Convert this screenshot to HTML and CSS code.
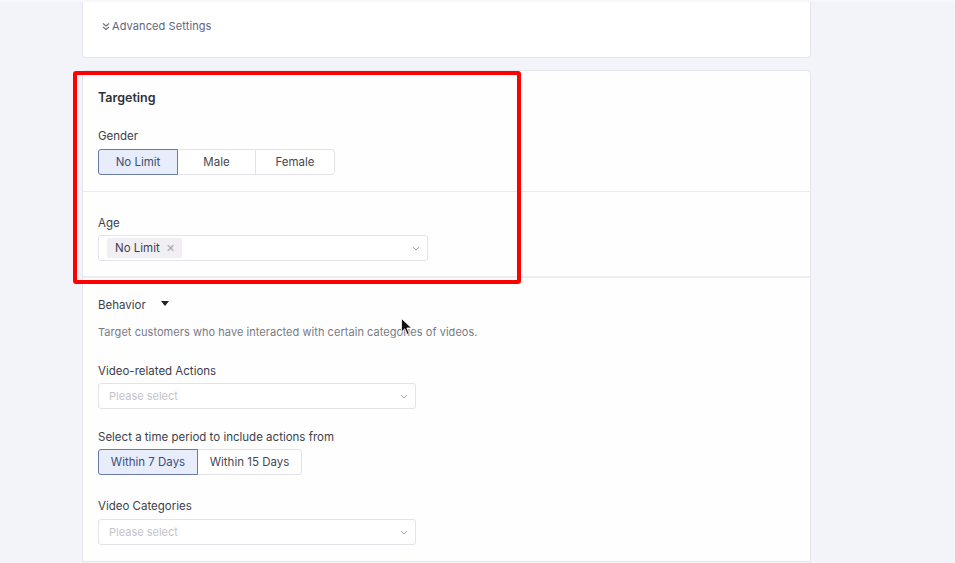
FILE: index.html
```html
<!DOCTYPE html>
<html>
<head>
<meta charset="utf-8">
<link rel="stylesheet" href="styles.css">
</head>
<body>
<div class="topstrip"></div>
<main class="page">
  <section class="card card-adv">
    <div class="adv">
      <svg class="adv-icon" width="8" height="9" viewBox="0 0 8 9"><path d="M1 1.5 L4 4 L7 1.5 M1 5 L4 7.5 L7 5" fill="none" stroke="#6a6f88" stroke-width="1.1"/></svg>
      <span>Advanced Settings</span>
    </div>
  </section>

  <section class="card card-main">
    <div class="sec sec-target">
      <h2 class="title">Targeting</h2>
      <div class="label lbl-gender">Gender</div>
      <div class="seg">
        <button class="seg-btn active w80">No Limit</button>
        <button class="seg-btn w78">Male</button>
        <button class="seg-btn w79">Female</button>
      </div>
    </div>
    <div class="sec sec-age">
      <div class="label">Age</div>
      <div class="select select-age">
        <span class="tag">No Limit <span class="tag-x">✕</span></span>
        <svg class="chev" width="8" height="5" viewBox="0 0 8 5"><path d="M1 1 L4 4 L7 1" fill="none" stroke="#a9abb5" stroke-width="1"/></svg>
      </div>
    </div>
    <div class="sec sec-behavior">
      <div class="label behavior">Behavior <svg class="caret" width="8" height="5" viewBox="0 0 8 5"><path d="M0 0 H8 L4 5 Z" fill="#222"/></svg></div>
      <p class="desc">Target customers who have interacted with certain categories of videos.</p>
      <div class="label lbl-actions">Video-related Actions</div>
      <div class="select select-std">
        <span class="ph">Please select</span>
        <svg class="chev" width="8" height="5" viewBox="0 0 8 5"><path d="M1 1 L4 4 L7 1" fill="none" stroke="#a9abb5" stroke-width="1"/></svg>
      </div>
      <div class="label lbl-period">Select a time period to include actions from</div>
      <div class="seg">
        <button class="seg-btn active w100">Within 7 Days</button>
        <button class="seg-btn w104">Within 15 Days</button>
      </div>
      <div class="label lbl-cats">Video Categories</div>
      <div class="select select-std">
        <span class="ph">Please select</span>
        <svg class="chev" width="8" height="5" viewBox="0 0 8 5"><path d="M1 1 L4 4 L7 1" fill="none" stroke="#a9abb5" stroke-width="1"/></svg>
      </div>
    </div>
  </section>
</main>
<div class="highlight"></div>
<svg class="cursor" width="12" height="18" viewBox="0 0 12 18"><path d="M0.5 0.5 L0.5 14 L3.8 10.8 L6.2 16.5 L8.2 15.6 L5.9 10 L10.5 10 Z" fill="#111" stroke="#fff" stroke-width="0.8"/></svg>
</body>
</html>
```

FILE: styles.css
```css
* { box-sizing: border-box; }
html, body { margin: 0; padding: 0; }
body {
  background: #f3f4fa;
  font-family: Inter, "Open Sans", "Liberation Sans", sans-serif;
  color: #3b3d48;
  width: 955px;
  height: 563px;
  overflow: hidden;
  position: relative;
}
.topstrip { height: 2px; background: #f8f8fa; }
.page { padding-left: 82px; }
.card {
  width: 729px;
  background: #fff;
  border: 1px solid #e5e5eb;
}
.card-adv {
  height: 56px;
  border-top: none;
  border-radius: 0 0 4px 4px;
  padding: 16px 0 0 19px;
}
.adv {
  display: flex;
  align-items: center;
  gap: 2px;
  font-size: 11px;
  line-height: 16px;
  color: #5f6480;
  letter-spacing: 0.1px;
}
.adv-icon { margin-top: 1px; }
.card-main {
  margin-top: 12px;
  border-radius: 4px 4px 0 0;
  border-bottom: 1px solid #e5e5eb;
  background: #fefeff;
}
.sec { padding-left: 15px; }
.sec-target { padding-top: 18px; padding-bottom: 16px; border-bottom: 1px solid #ebebef; }
.sec-age { padding-top: 23px; padding-bottom: 15px; border-bottom: 2px solid #ececf1; }
.sec-behavior { padding-top: 19px; padding-bottom: 16px; }
.title {
  margin: 0;
  font-size: 12.5px;
  line-height: 18px;
  font-weight: 600;
  color: #2f313b;
}
.label {
  font-size: 11.5px;
  line-height: 16px;
  color: #3d3f4a;
  margin-bottom: 4px;
}
.lbl-gender { margin-top: 21px; margin-bottom: 5px; }
.behavior { display: flex; align-items: center; gap: 0; margin-bottom: 0; }
.caret { margin-left: 15px; margin-top: -3px; }
.desc {
  margin: 11px 0 0;
  font-size: 11px;
  line-height: 16px;
  color: #787b86;
  letter-spacing: 0.05px;
}
.lbl-actions { margin-top: 23px; }
.lbl-period { margin-top: 20px; }
.lbl-cats { margin-top: 23px; margin-bottom: 5px; }
.seg { display: flex; }
.seg-btn {
  height: 26px;
  font-family: inherit;
  font-size: 11.5px;
  color: #454752;
  background: #fff;
  border: 1px solid #e2e2e8;
  margin: 0 0 0 -1px;
  padding: 0;
}
.seg-btn:first-child { margin-left: 0; border-radius: 3px 0 0 3px; }
.seg-btn:last-child { border-radius: 0 3px 3px 0; }
.seg-btn.active {
  background: #e8edfb;
  border-color: #6a79a6;
  color: #3e4d78;
  position: relative;
  z-index: 1;
}
.w80 { width: 80px; }
.w78 { width: 79px; }
.w79 { width: 80px; }
.w100 { width: 100px; }
.w104 { width: 105px; }
.select {
  height: 26px;
  border: 1px solid #e3e3e9;
  border-radius: 3px;
  background: #fff;
  display: flex;
  align-items: center;
  position: relative;
}
.select-age { width: 330px; padding-left: 8px; }
.select-std { width: 318px; padding-left: 10px; }
.chev { position: absolute; right: 7px; top: 10px; }
.tag {
  height: 20px;
  display: inline-flex;
  align-items: center;
  background: #f1eff3;
  border-radius: 2px;
  padding: 0 7px 0 8px;
  font-size: 11.5px;
  color: #3d3f4a;
}
.tag-x { font-size: 10.5px; color: #a3a5ae; margin-left: 6px; }
.ph { font-size: 11px; color: #c3c3cb; }
.highlight {
  position: absolute;
  left: 73px;
  top: 71px;
  width: 448px;
  height: 213px;
  border: 4px solid #ff0000;
  border-radius: 3px;
}
.cursor { position: absolute; left: 401px; top: 318px; }
```
